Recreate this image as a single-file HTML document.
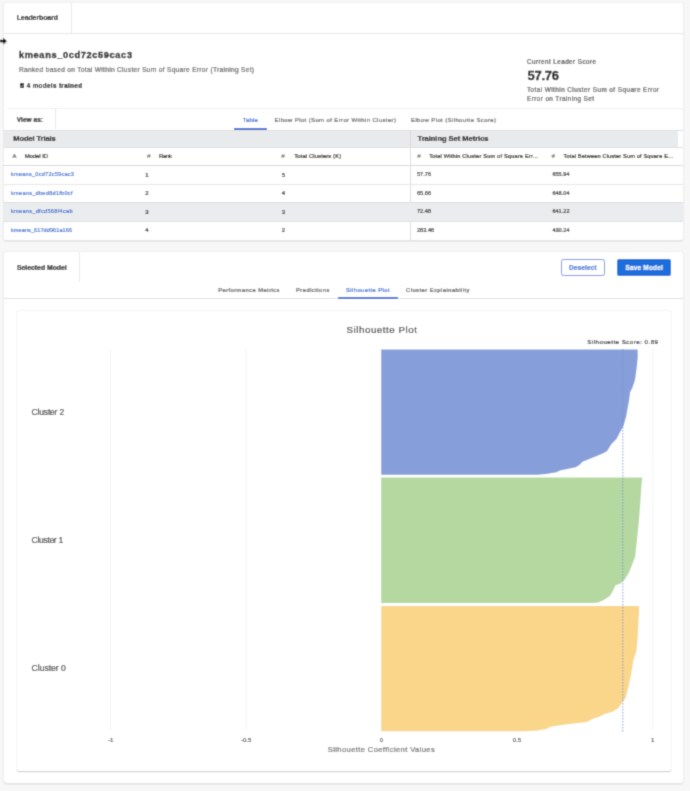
<!DOCTYPE html>
<html><head><meta charset="utf-8"><style>
html,body{margin:0;padding:0;}
body{width:690px;height:791px;background:#f7f7f8;position:relative;overflow:hidden;font-family:"Liberation Sans",sans-serif;}
.abs{position:absolute;}
.t{position:absolute;white-space:pre;line-height:1;font-family:"Liberation Sans",sans-serif;}
.t{-webkit-text-stroke:0.2px currentColor;}
.r{-webkit-text-stroke:0.22px currentColor;}
.lk{-webkit-text-stroke:0.12px currentColor;}
.bb{-webkit-text-stroke:0.35px currentColor;}
.bm{-webkit-text-stroke:0.2px currentColor;}
.card{position:absolute;background:#fff;box-shadow:0 0 0 0.7px rgba(0,0,0,0.07),0 1px 1.5px rgba(0,0,0,0.17);border-radius:2px;}
.hl{position:absolute;height:1px;background:#e3e3e3;}
.vl{position:absolute;width:1px;background:#e3e3e3;}
</style></head><body>
<svg width="0" height="0" style="position:absolute"><filter id="bl" x="-2%" y="-2%" width="104%" height="104%"><feConvolveMatrix order="3" kernelMatrix="0.0276 0.111 0.0276 0.111 0.446 0.111 0.0276 0.111 0.0276" edgeMode="duplicate" preserveAlpha="false"/></filter></svg>
<div id="wrap" style="position:absolute;left:0;top:0;width:690px;height:791px;filter:url(#bl)">
<!-- top card -->
<div class="card" style="left:3.8px;top:3px;width:679.4px;height:237.2px;border-radius:1.5px"></div>
<div class="vl" style="left:71px;top:3px;height:30px;background:#e8e8e8"></div>
<div class="hl" style="left:3px;top:33px;width:680px;background:#e6e6e6"></div>
<!-- view as row -->
<div class="hl" style="left:7px;top:108px;width:676px;background:#f0f0f0"></div>
<div class="vl" style="left:55px;top:108px;height:21px;background:#e8e8e8"></div>
<div class="abs" style="left:234.4px;top:128.3px;width:32.5px;height:1.7px;background:#3a6fd8"></div>
<!-- table header bar -->
<div class="abs" style="left:3px;top:129.5px;width:675px;height:17px;background:#e9eaec"></div>
<div class="hl" style="left:3px;top:129.5px;width:680px;background:#e0e0e0"></div>
<div class="vl" style="left:410px;top:129.5px;height:110px;background:#dcdcdc"></div>
<div class="hl" style="left:3px;top:146.5px;width:680px;background:#e0e0e0"></div>
<div class="hl" style="left:3px;top:165px;width:680px;background:#d8d8d8"></div>
<div class="hl" style="left:3px;top:183.5px;width:680px;background:#e6e6e6"></div>
<div class="abs" style="left:3px;top:202px;width:680px;height:19px;background:#ebecee"></div>
<div class="hl" style="left:3px;top:202px;width:680px;background:#dedede"></div>
<div class="hl" style="left:3px;top:220.5px;width:680px;background:#e0e0e0"></div>
<!-- selected model card -->
<div class="card" style="left:4px;top:252px;width:679px;height:531px;"></div>
<div class="vl" style="left:79px;top:252px;height:30px;background:#e8e8e8"></div>
<div class="hl" style="left:4px;top:297.5px;width:679px;background:#e0e0e0"></div>
<div class="abs" style="left:338px;top:297px;width:59.5px;height:1.7px;background:#3a6fd8"></div>
<div class="abs" style="left:560.6px;top:258.6px;width:42px;height:15.7px;border:1.2px solid #6492e2;border-radius:2.5px;background:#fff"></div>
<div class="abs" style="left:617.3px;top:258.6px;width:53.4px;height:17.7px;border-radius:2px;background:#1f6edc"></div>
<!-- chart card -->
<div class="card" style="left:16.5px;top:311px;width:654.5px;height:459.5px;border-radius:2px;box-shadow:0 0.5px 1.5px rgba(0,0,0,0.22)"></div>
<svg class="abs" width="690" height="791" viewBox="0 0 690 791" style="left:0;top:0">
<line x1="110.6" y1="349" x2="110.6" y2="730" stroke="#f3f3f3" stroke-width="1"/>
<line x1="246.1" y1="349" x2="246.1" y2="730" stroke="#f3f3f3" stroke-width="1"/>
<line x1="652.6" y1="349" x2="652.6" y2="730" stroke="#f3f3f3" stroke-width="1"/>
<path d="M381.2,349.5 L637.6,349.5 L637.8,356 L637.1,364.4 L636,373 L634.9,380.5 L632.3,388 L630.1,392.3 L629,400.9 L627.4,409.5 L626.3,416 L624.6,422 L623.5,426.1 L620,432.2 L616.5,439.1 L611.3,444.3 L607,451.3 L601.7,453.9 L593,457.4 L582.6,461.7 L579.1,465.2 L575.7,467.3 L560,470.4 L556.5,472.2 L546.1,473.9 L537.4,474.8 L381.2,474.8 Z" fill="#869ed9"/>
<path d="M381.2,477.6 L642.2,477.6 L641.3,487.7 L640.1,505.4 L638.7,523.1 L636.9,540.8 L635.1,556.7 L632.5,563.8 L628.9,572.7 L624.5,579.7 L620,583.8 L615.7,585.2 L612.8,591 L609.9,596.1 L604.1,599.7 L598.3,602.6 L592.5,603.1 L381.2,603.1 Z" fill="#b4d8a0"/>
<path d="M381.2,606.1 L639.2,606.1 L638.7,617.7 L637.8,635.4 L636.4,651.3 L633.4,660.2 L631.1,674.3 L628.1,688.5 L625.4,698.2 L621.9,702.7 L618.3,708 L613,711.5 L604.2,714.2 L598.8,717 L592.8,718.8 L587,722 L565.2,724.6 L550.7,726.8 L546.4,729 L536.2,730.7 L520,731.2 L381.2,731.2 Z" fill="#f9d68a"/>
<line x1="622.8" y1="349" x2="622.8" y2="733" stroke="#6f8fd8" stroke-width="0.9" stroke-dasharray="1.5,1.5"/>
</svg>
<!-- icon 4 models -->
<svg class="abs" style="left:20px;top:82.9px" width="4.2" height="5.3" viewBox="0 0 4.2 5.3"><rect x="0" y="0" width="4.2" height="5.3" rx="0.7" fill="#151515"/><path d="M1.2,3.9 L2.9,2.0" stroke="#bbb" stroke-width="0.9" stroke-linecap="round"/></svg>
<!-- cursor -->
<svg class="abs" style="left:0;top:34px" width="10" height="14" viewBox="0 0 10 14">
<path d="M0.5,9.2 L3.6,9.2 L3.6,11.6 L7.6,7.9 L3.6,4.2 L3.6,6.6 L0.5,6.6 Z" fill="#999" opacity="0.45"/>
<path d="M-1,5.8 L3.2,5.8 L3.2,3.6 L7,7 L3.2,10.4 L3.2,8.2 L-1,8.2 Z" fill="#000" stroke="#fff" stroke-width="0.4"/>
</svg>
<span class="t" style="left:16.70px;top:15.00px;font-size:6.9px;color:#282828;font-weight:700;letter-spacing:-0.045px;">Leaderboard</span>
<span class="t bb" style="left:19.00px;top:51.00px;font-size:9.2px;color:#1b1b1b;font-weight:700;letter-spacing:0.658px;">kmeans_0cd72c59cac3</span>
<span class="t r" style="left:19.00px;top:67.00px;font-size:6.6px;color:#646464;letter-spacing:0.300px;">Ranked based on Total Within Cluster Sum of Square Error (Training Set)</span>
<span class="t" style="left:26.70px;top:83.00px;font-size:6.3px;color:#1b1b1b;font-weight:700;letter-spacing:0.350px;">4 models trained</span>
<span class="t r" style="left:527.00px;top:59.00px;font-size:6.3px;color:#4c4c4c;letter-spacing:0.444px;">Current Leader Score</span>
<span class="t bb" style="left:527.40px;top:69.00px;font-size:13.0px;color:#1b1b1b;font-weight:700;letter-spacing:-0.212px;">57.76</span>
<span class="t r" style="left:527.00px;top:87.00px;font-size:6.4px;color:#585858;letter-spacing:0.425px;">Total Within Cluster Sum of Square Error</span>
<span class="t r" style="left:527.00px;top:96.00px;font-size:6.4px;color:#585858;letter-spacing:0.402px;">Error on Training Set</span>
<span class="t" style="left:16.80px;top:117.00px;font-size:6.6px;color:#282828;font-weight:700;letter-spacing:-0.012px;">View as:</span>
<span class="t r" style="left:242.80px;top:117.00px;font-size:6.0px;color:#3b6fd6;letter-spacing:0.164px;">Table</span>
<span class="t r" style="left:274.60px;top:117.00px;font-size:6.0px;color:#666666;letter-spacing:0.368px;">Elbow Plot (Sum of Error Within Cluster)</span>
<span class="t r" style="left:411.00px;top:117.00px;font-size:6.0px;color:#666666;letter-spacing:0.381px;">Elbow Plot (Silhoutte Score)</span>
<span class="t bm" style="left:13.30px;top:135.00px;font-size:7.5px;color:#1b1b1b;font-weight:700;letter-spacing:-0.087px;">Model Trials</span>
<span class="t bm" style="left:417.50px;top:135.00px;font-size:7.5px;color:#1b1b1b;font-weight:700;letter-spacing:-0.015px;">Training Set Metrics</span>
<span class="t r" style="left:12.60px;top:154.00px;font-size:5.8px;color:#444444;">A</span>
<span class="t r" style="left:24.70px;top:153.00px;font-size:6.0px;color:#282828;letter-spacing:-0.088px;">Model ID</span>
<span class="t r" style="left:147.10px;top:153.00px;font-size:6.2px;color:#868686;font-style:italic;">#</span>
<span class="t r" style="left:281.30px;top:153.00px;font-size:6.2px;color:#868686;font-style:italic;">#</span>
<span class="t r" style="left:417.20px;top:153.00px;font-size:6.2px;color:#868686;font-style:italic;">#</span>
<span class="t r" style="left:551.50px;top:153.00px;font-size:6.2px;color:#868686;font-style:italic;">#</span>
<span class="t r" style="left:159.00px;top:153.00px;font-size:6.0px;color:#282828;letter-spacing:-0.305px;">Rank</span>
<span class="t r" style="left:294.30px;top:153.00px;font-size:6.0px;color:#282828;letter-spacing:0.052px;">Total Clusters (K)</span>
<span class="t r" style="left:429.20px;top:154.00px;font-size:5.6px;color:#282828;letter-spacing:0.204px;">Total Within Cluster Sum of Square Err...</span>
<span class="t r" style="left:563.50px;top:154.00px;font-size:5.6px;color:#282828;letter-spacing:0.161px;">Total Between Cluster Sum of Square E...</span>
<span class="t lk" style="left:11.00px;top:172.00px;font-size:5.6px;color:#2a62cf;letter-spacing:0.234px;">kmeans_0cd72c59cac3</span>
<span class="t r" style="left:145.30px;top:172.00px;font-size:6.0px;color:#282828;">1</span>
<span class="t r" style="left:281.80px;top:172.00px;font-size:6.0px;color:#282828;">5</span>
<span class="t r" style="left:417.00px;top:172.00px;font-size:5.6px;color:#363636;">57.76</span>
<span class="t r" style="left:552.40px;top:172.00px;font-size:5.6px;color:#363636;">655.94</span>
<span class="t lk" style="left:11.00px;top:191.00px;font-size:5.6px;color:#2a62cf;letter-spacing:0.272px;">kmeans_dbed8d1fb0cf</span>
<span class="t r" style="left:145.30px;top:190.00px;font-size:6.0px;color:#282828;">2</span>
<span class="t r" style="left:281.80px;top:190.00px;font-size:6.0px;color:#282828;">4</span>
<span class="t r" style="left:417.00px;top:191.00px;font-size:5.6px;color:#363636;">65.66</span>
<span class="t r" style="left:552.40px;top:191.00px;font-size:5.6px;color:#363636;">648.04</span>
<span class="t lk" style="left:11.00px;top:209.00px;font-size:5.6px;color:#2a62cf;letter-spacing:0.289px;">kmeans_dfcd568f4cab</span>
<span class="t r" style="left:145.30px;top:209.00px;font-size:6.0px;color:#282828;">3</span>
<span class="t r" style="left:281.80px;top:209.00px;font-size:6.0px;color:#282828;">3</span>
<span class="t r" style="left:417.00px;top:209.00px;font-size:5.6px;color:#363636;">72.48</span>
<span class="t r" style="left:552.40px;top:209.00px;font-size:5.6px;color:#363636;">641.22</span>
<span class="t lk" style="left:11.00px;top:228.00px;font-size:5.6px;color:#2a62cf;letter-spacing:0.054px;">kmeans_617dd961a166</span>
<span class="t r" style="left:145.30px;top:227.00px;font-size:6.0px;color:#282828;">4</span>
<span class="t r" style="left:281.80px;top:227.00px;font-size:6.0px;color:#282828;">2</span>
<span class="t r" style="left:417.00px;top:228.00px;font-size:5.6px;color:#363636;">283.46</span>
<span class="t r" style="left:552.40px;top:228.00px;font-size:5.6px;color:#363636;">430.24</span>
<span class="t" style="left:16.90px;top:265.00px;font-size:6.9px;color:#1b1b1b;font-weight:700;letter-spacing:-0.021px;">Selected Model</span>
<span class="t" style="left:568.90px;top:265.00px;font-size:6.5px;color:#4576d6;font-weight:700;letter-spacing:0.150px;">Deselect</span>
<span class="t" style="left:625.40px;top:265.00px;font-size:6.5px;color:#fff;font-weight:700;letter-spacing:0.182px;">Save Model</span>
<span class="t r" style="left:218.20px;top:288.00px;font-size:5.8px;color:#585858;letter-spacing:0.434px;">Performance Metrics</span>
<span class="t r" style="left:296.00px;top:288.00px;font-size:5.8px;color:#585858;letter-spacing:0.471px;">Predictions</span>
<span class="t r" style="left:346.00px;top:288.00px;font-size:5.8px;color:#3b6fd6;letter-spacing:0.444px;">Silhouette Plot</span>
<span class="t r" style="left:406.00px;top:288.00px;font-size:5.8px;color:#585858;letter-spacing:0.461px;">Cluster Explainability</span>
<span class="t r" style="left:346.50px;top:325.00px;font-size:9.8px;color:#444444;letter-spacing:0.522px;">Silhouette Plot</span>
<span class="t r" style="left:587.30px;top:339.00px;font-size:6.2px;color:#363636;letter-spacing:0.467px;">Silhouette Score: 0.89</span>
<span class="t r" style="left:31.60px;top:408.00px;font-size:8.6px;color:#474747;letter-spacing:-0.224px;">Cluster 2</span>
<span class="t r" style="left:31.60px;top:536.00px;font-size:8.6px;color:#474747;letter-spacing:-0.349px;">Cluster 1</span>
<span class="t r" style="left:31.60px;top:664.00px;font-size:8.6px;color:#474747;letter-spacing:-0.036px;">Cluster 0</span>
<span class="t r" style="left:108.13px;top:737.00px;font-size:6.0px;color:#545454;">-1</span>
<span class="t r" style="left:241.03px;top:737.00px;font-size:6.0px;color:#545454;">-0.5</span>
<span class="t r" style="left:379.73px;top:737.00px;font-size:6.0px;color:#545454;">0</span>
<span class="t r" style="left:512.83px;top:737.00px;font-size:6.0px;color:#545454;">0.5</span>
<span class="t r" style="left:650.93px;top:737.00px;font-size:6.0px;color:#545454;">1</span>
<span class="t r" style="left:327.80px;top:746.00px;font-size:7.6px;color:#707070;letter-spacing:0.375px;">Silhouette Coefficient Values</span>
</div>
</body></html>
